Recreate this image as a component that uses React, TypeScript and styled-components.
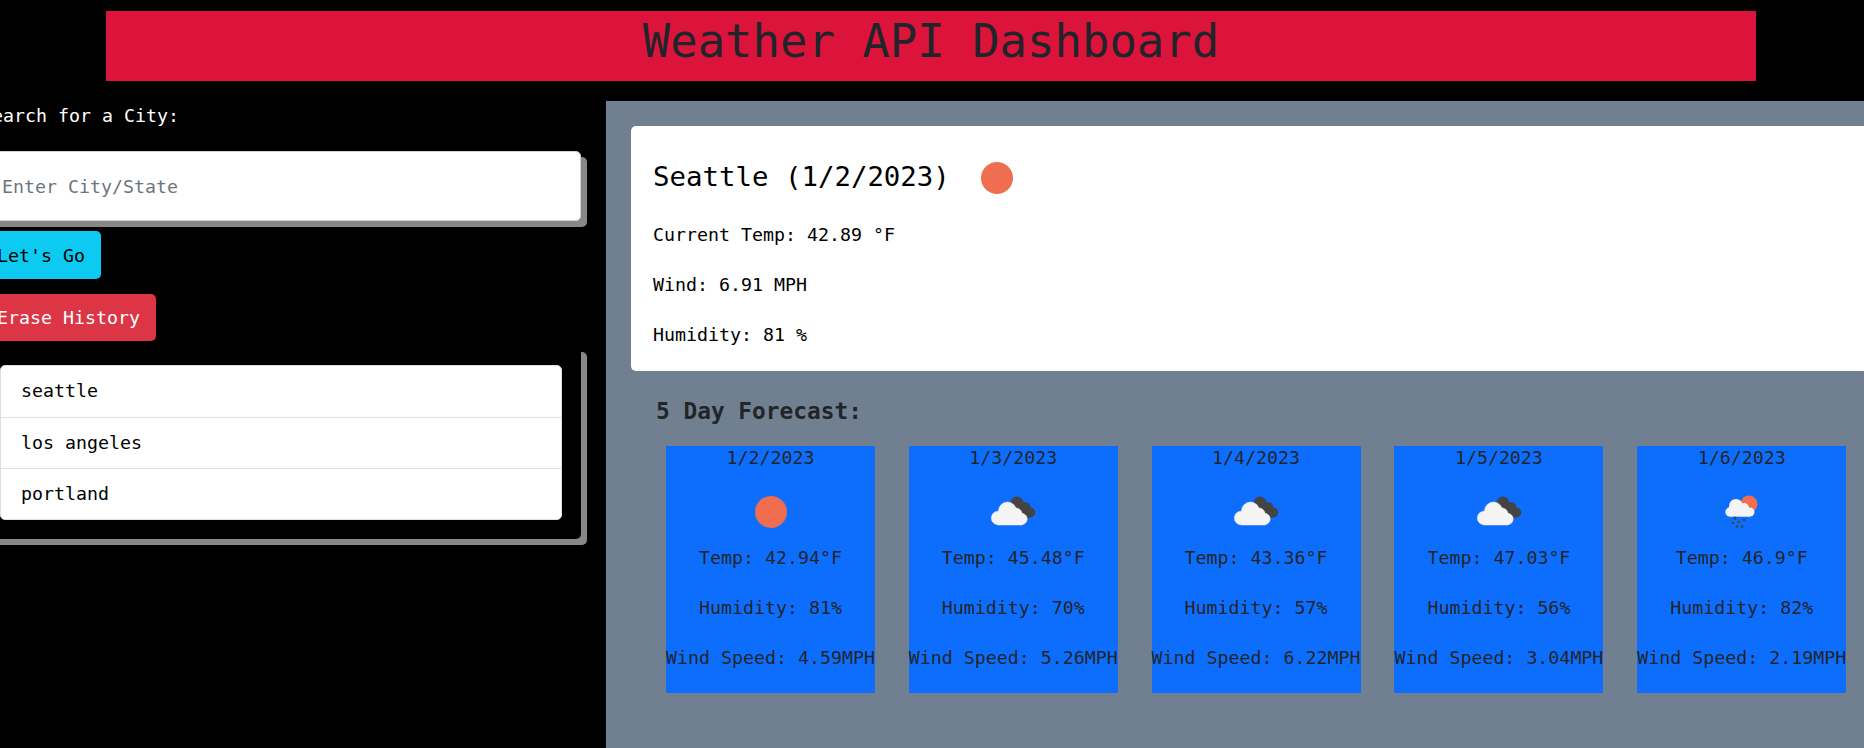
import * as React from 'react';
import styled, { createGlobalStyle } from 'styled-components';

const mono = '"DejaVu Sans Mono", "Liberation Mono", monospace';

const GlobalStyle = createGlobalStyle`
  html, body {
    margin: 0;
    padding: 0;
    height: 100%;
    overflow: hidden;
    background: #000;
  }
  * {
    box-sizing: border-box;
  }
`;

const Page = styled.div`
  width: 1864px;
  height: 748px;
  overflow: hidden;
  background: #000;
  font-family: ${mono};
  font-size: 18.27px;
  line-height: 30px;
  color: #212529;
  display: flex;
  flex-direction: column;
`;

const Banner = styled.h1`
  flex: none;
  width: 1650px;
  height: 70px;
  margin: 11px 0 20px 106px;
  background: #dc143c;
  color: #212529;
  font-size: 45.6px;
  font-weight: 400;
  line-height: 62px;
  text-align: center;
`;

const Content = styled.div`
  flex: 1;
  display: flex;
  min-height: 0;
`;

const Sidebar = styled.aside`
  flex: none;
  width: 625px;
  margin-left: -19px;
`;

const SearchLabel = styled.label`
  display: block;
  height: 30px;
  margin-bottom: 20px;
  color: #fff;
`;

const SearchInput = styled.input`
  display: block;
  width: 595px;
  height: 70px;
  margin: 0 0 10px 5px;
  padding: 0 15px;
  border: 1px solid #ced4da;
  border-radius: 5px;
  background: #fff;
  box-shadow: 6px 6px 0 #888;
  font-family: ${mono};
  font-size: 18.27px;
  color: #212529;
  outline: none;

  &::placeholder {
    color: #6c757d;
    opacity: 1;
  }
`;

const Button = styled.button<{ $danger?: boolean }>`
  display: block;
  height: ${({ $danger }) => ($danger ? '47px' : '48px')};
  margin-bottom: ${({ $danger }) => ($danger ? '5px' : '15px')};
  padding: 0 16px;
  border: 0;
  border-radius: 5px;
  background: ${({ $danger }) => ($danger ? '#dc3545' : '#0dcaf0')};
  color: ${({ $danger }) => ($danger ? '#fff' : '#000')};
  font-family: ${mono};
  font-size: 18.27px;
  white-space: nowrap;
`;

const HistoryBox = styled.div`
  width: 595px;
  height: 193px;
  margin-left: 5px;
  padding: 19px 0 0 14px;
  background: #000;
  border-radius: 5px;
  box-shadow: 6px 6px 0 #888;
`;

const HistoryList = styled.ul`
  width: 562px;
  margin: 0;
  padding: 0;
  list-style: none;
  background: #fff;
  border: 1px solid #dfdfdf;
  border-radius: 5px;
`;

const HistoryItem = styled.li`
  height: 51px;
  padding: 0 20px;
  color: #000;
  line-height: 49px;
  border-top: 1px solid #dfdfdf;

  &:first-child {
    border-top: 0;
  }
`;

const Main = styled.main`
  flex: 1;
  min-width: 0;
  padding: 25px 0 0 25px;
  background: #708090;
`;

const TodayCard = styled.section`
  width: 1400px;
  height: 245px;
  padding: 26px 22px 0;
  background: #fff;
  border-radius: 5px;
  color: #000;
`;

const TodayTitle = styled.h2`
  display: flex;
  align-items: center;
  gap: 22px;
  height: 50px;
  margin: 0 0 18px;
  font-size: 27.4px;
  font-weight: 400;
  line-height: 36px;
`;

const TitleIcon = styled.span`
  display: block;
  height: 50px;
  margin-top: 2px;
`;

const TodayLine = styled.p`
  margin: 0 0 20px;
`;

const ForecastTitle = styled.h3`
  height: 32px;
  margin: 24px 0 19px 25px;
  font-size: 22.8px;
  font-weight: 700;
  line-height: 32px;
`;

const ForecastRow = styled.div`
  display: flex;
  gap: 33.8px;
  margin-left: 35px;
`;

const DayCard = styled.article`
  flex: none;
  width: 209px;
  height: 247px;
  display: flex;
  flex-direction: column;
  align-items: center;
  background: #0d6efd;
  white-space: nowrap;
`;

const DayDate = styled.div`
  line-height: 24px;
`;

const DayIcon = styled.div`
  height: 50px;
  margin: 17px 0 6px;
`;

const DayLine = styled.p`
  margin: 0 0 20px;
`;

const Sun = () => (
  <svg width="50" height="50" viewBox="0 0 50 50">
    <circle cx="25" cy="25" r="16" fill="#ee6e4f" />
  </svg>
);

const Clouds = () => (
  <svg width="50" height="50" viewBox="0 0 50 50">
    <g fill="#444">
      <circle cx="29" cy="16" r="6.5" />
      <circle cx="37" cy="20.5" r="5.5" />
      <circle cx="42.3" cy="25.5" r="5" />
      <path d="M24 14 L43 30 L34 33 Z" />
    </g>
    <g fill="#f4f4f4" stroke="#f4f4f4" strokeWidth="0.5">
      <circle cx="19.5" cy="24" r="9" />
      <circle cx="10" cy="31" r="6.7" />
      <circle cx="28" cy="27" r="6" />
      <circle cx="33.5" cy="32" r="5.7" />
      <rect x="10" y="26" width="24" height="12" />
    </g>
  </svg>
);

const Rain = () => (
  <svg width="50" height="50" viewBox="0 0 50 50">
    <circle cx="32" cy="17" r="8.5" fill="#ee6e4f" />
    <g fill="#f4f4f4">
      <circle cx="19" cy="19" r="7" />
      <circle cx="13" cy="25" r="4.7" />
      <circle cx="27" cy="21" r="5" />
      <circle cx="33" cy="25" r="4.5" />
      <rect x="13" y="21" width="20" height="8.7" />
    </g>
    <g fill="#444">
      <circle cx="18" cy="31" r="1.5" />
      <circle cx="16" cy="36" r="1.3" />
      <circle cx="22" cy="35" r="1.3" />
      <circle cx="27" cy="33" r="1.3" />
      <circle cx="20" cy="39.5" r="1.3" />
      <circle cx="25" cy="39.5" r="1.3" />
    </g>
  </svg>
);

const forecast = [
  { date: '1/2/2023', icon: <Sun />, temp: '42.94', humidity: '81', wind: '4.59' },
  { date: '1/3/2023', icon: <Clouds />, temp: '45.48', humidity: '70', wind: '5.26' },
  { date: '1/4/2023', icon: <Clouds />, temp: '43.36', humidity: '57', wind: '6.22' },
  { date: '1/5/2023', icon: <Clouds />, temp: '47.03', humidity: '56', wind: '3.04' },
  { date: '1/6/2023', icon: <Rain />, temp: '46.9', humidity: '82', wind: '2.19' },
];

const cities = ['seattle', 'los angeles', 'portland'];

export default function App() {
  return (
    <>
      <GlobalStyle />
      <Page>
        <Banner>Weather API Dashboard</Banner>
        <Content>
          <Sidebar>
            <SearchLabel htmlFor="city">Search for a City:</SearchLabel>
            <SearchInput id="city" placeholder="Enter City/State" />
            <Button>Let's Go</Button>
            <Button $danger>Erase History</Button>
            <HistoryBox>
              <HistoryList>
                {cities.map(city => (
                  <HistoryItem key={city}>{city}</HistoryItem>
                ))}
              </HistoryList>
            </HistoryBox>
          </Sidebar>
          <Main>
            <TodayCard>
              <TodayTitle>
                Seattle (1/2/2023)
                <TitleIcon>
                  <Sun />
                </TitleIcon>
              </TodayTitle>
              <TodayLine>Current Temp: 42.89 °F</TodayLine>
              <TodayLine>Wind: 6.91 MPH</TodayLine>
              <TodayLine>Humidity: 81 %</TodayLine>
            </TodayCard>
            <ForecastTitle>5 Day Forecast:</ForecastTitle>
            <ForecastRow>
              {forecast.map(day => (
                <DayCard key={day.date}>
                  <DayDate>{day.date}</DayDate>
                  <DayIcon>{day.icon}</DayIcon>
                  <DayLine>Temp: {day.temp}°F</DayLine>
                  <DayLine>Humidity: {day.humidity}%</DayLine>
                  <DayLine>Wind Speed: {day.wind}MPH</DayLine>
                </DayCard>
              ))}
            </ForecastRow>
          </Main>
        </Content>
      </Page>
    </>
  );
}
